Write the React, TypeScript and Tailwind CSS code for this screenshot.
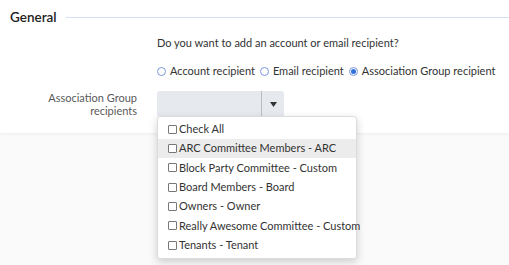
import React from "react";

const items = [
  "ARC Committee Members - ARC",
  "Block Party Committee - Custom",
  "Board Members - Board",
  "Owners - Owner",
  "Really Awesome Committee - Custom",
  "Tenants - Tenant",
];

function Radio({ checked, label }: { checked?: boolean; label: string }) {
  return (
    <label className="flex items-center gap-[4px] whitespace-nowrap">
      <span className="flex h-[9px] w-[9px] items-center justify-center rounded-full border border-[#7a97d8] bg-white">
        {checked && <span className="h-[5px] w-[5px] rounded-full bg-[#2f6fe0]" />}
      </span>
      <span>{label}</span>
    </label>
  );
}

function Box() {
  return <span className="inline-block h-[9px] w-[9px] shrink-0 rounded-[1px] border border-[#777] bg-white" />;
}

export default function App() {
  return (
    <div
      className="relative h-[265px] w-[509px] overflow-hidden bg-[#fafafa] text-[11px] text-[#333]"
      style={{ fontFamily: 'Lato, "Noto Sans", sans-serif' }}
    >
      <div className="h-[133px] bg-white shadow-[0_1px_3px_rgba(0,0,0,0.06)]">
        <div className="flex items-center pt-[7px]">
          <h2 className="pl-[10px] pr-[9px] text-[13.5px] font-semibold leading-[20px] text-[#222]">General</h2>
          <div className="h-px flex-1 bg-[#cfe0f7]" />
        </div>
        <div className="pl-[157px] pt-[8px] leading-[16px]">Do you want to add an account or email recipient?</div>
        <div className="flex gap-[5px] pl-[157px] pt-[12px] leading-[16px]">
          <Radio label="Account recipient" />
          <Radio label="Email recipient" />
          <Radio checked label="Association Group recipient" />
        </div>
        <div className="flex pt-[12px]">
          <div className="w-[137px] text-right leading-[13px] text-[#5a5a5a]">
            <div>Association Group</div>
            <div>recipients</div>
          </div>
          <div className="relative ml-[20px]">
            <div className="flex h-[26px] w-[127px] rounded-[3px] bg-[#e6e9ed]">
              <div className="flex-1 border-r border-[#b9bcc0]" />
              <div className="flex w-[22px] items-center justify-center">
                <svg width="7" height="5" viewBox="0 0 7 5">
                  <path d="M0 0h7L3.5 5z" fill="#333" />
                </svg>
              </div>
            </div>
            <div className="absolute left-0 top-[25px] z-10 w-[200px] rounded-[3px] border border-[#dcdcdc] bg-white py-[3px] shadow-[0_3px_8px_rgba(0,0,0,0.18)]">
              <div className="flex h-[19px] items-center gap-[2px] pl-[10px]">
                <Box />
                <span>Check All</span>
              </div>
              {items.map((t, i) => (
                <div
                  key={t}
                  className={`flex h-[19.3px] items-center gap-[2px] pl-[10px] ${i === 0 ? "bg-[#ececec]" : ""}`}
                >
                  <Box />
                  <span className="whitespace-nowrap">{t}</span>
                </div>
              ))}
            </div>
          </div>
        </div>
      </div>
    </div>
  );
}
